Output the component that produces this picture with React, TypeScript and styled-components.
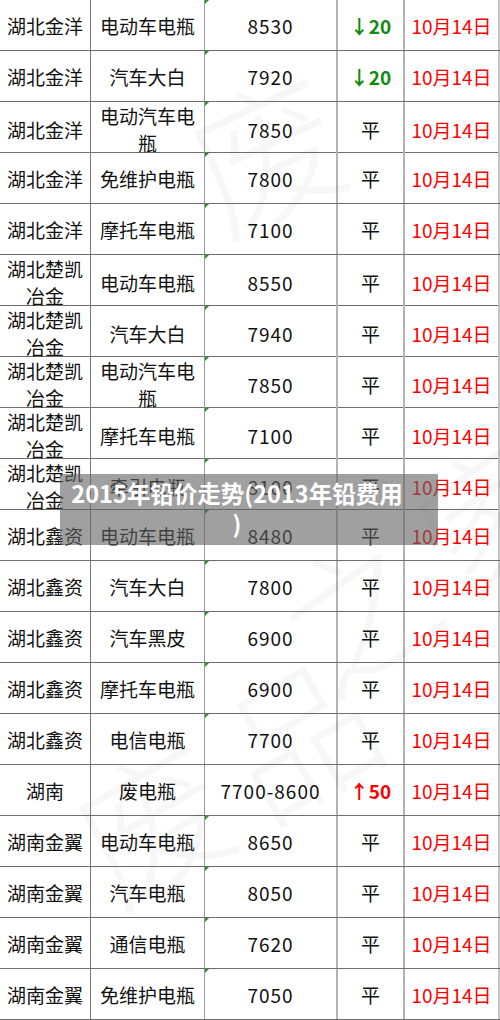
import styled, { createGlobalStyle } from 'styled-components';

const GlobalStyle = createGlobalStyle`
    html, body {
        margin: 0;
        padding: 0;
        background: #ffffff;
    }
    body {
        font-family: "Noto Sans CJK SC", "Noto Sans", sans-serif;
    }
`;

type Trend = 'down' | 'up' | 'flat';

type PriceRow = {
    company: string;
    product: string;
    price: string;
    trend: Trend;
    change?: string;
    date: string;
    textPrice?: boolean;
};

const rows: PriceRow[] = [
    { company: '湖北金洋', product: '电动车电瓶', price: '8530', trend: 'down', change: '20', date: '10月14日' },
    { company: '湖北金洋', product: '汽车大白', price: '7920', trend: 'down', change: '20', date: '10月14日' },
    { company: '湖北金洋', product: '电动汽车电瓶', price: '7850', trend: 'flat', date: '10月14日' },
    { company: '湖北金洋', product: '免维护电瓶', price: '7800', trend: 'flat', date: '10月14日' },
    { company: '湖北金洋', product: '摩托车电瓶', price: '7100', trend: 'flat', date: '10月14日' },
    { company: '湖北楚凯冶金', product: '电动车电瓶', price: '8550', trend: 'flat', date: '10月14日' },
    { company: '湖北楚凯冶金', product: '汽车大白', price: '7940', trend: 'flat', date: '10月14日' },
    { company: '湖北楚凯冶金', product: '电动汽车电瓶', price: '7850', trend: 'flat', date: '10月14日' },
    { company: '湖北楚凯冶金', product: '摩托车电瓶', price: '7100', trend: 'flat', date: '10月14日' },
    { company: '湖北楚凯冶金', product: '牵引电瓶', price: '8100', trend: 'flat', date: '10月14日' },
    { company: '湖北鑫资', product: '电动车电瓶', price: '8480', trend: 'flat', date: '10月14日' },
    { company: '湖北鑫资', product: '汽车大白', price: '7800', trend: 'flat', date: '10月14日' },
    { company: '湖北鑫资', product: '汽车黑皮', price: '6900', trend: 'flat', date: '10月14日' },
    { company: '湖北鑫资', product: '摩托车电瓶', price: '6900', trend: 'flat', date: '10月14日' },
    { company: '湖北鑫资', product: '电信电瓶', price: '7700', trend: 'flat', date: '10月14日' },
    { company: '湖南', product: '废电瓶', price: '7700-8600', trend: 'up', change: '50', date: '10月14日', textPrice: true },
    { company: '湖南金翼', product: '电动车电瓶', price: '8650', trend: 'flat', date: '10月14日' },
    { company: '湖南金翼', product: '汽车电瓶', price: '8050', trend: 'flat', date: '10月14日' },
    { company: '湖南金翼', product: '通信电瓶', price: '7620', trend: 'flat', date: '10月14日' },
    { company: '湖南金翼', product: '免维护电瓶', price: '7050', trend: 'flat', date: '10月14日' },
];

const App = () => {
    return (
        <Page>
            <GlobalStyle />
            <Sheet>
                {rows.map((row, i) => (
                    <Row key={i}>
                        <Cell $border="#7a7a7a" $width={1}>
                            {row.company}
                        </Cell>
                        <Cell $border="#9a9a9a" $width={1}>
                            {row.product}
                        </Cell>
                        <PriceCell $flag={!row.textPrice} $border="#b4b4b4" $width={2}>
                            {row.price}
                        </PriceCell>
                        <Cell $border="#b4b4b4" $width={2}>
                            {row.trend === 'flat' ? (
                                '平'
                            ) : (
                                <Change $up={row.trend === 'up'}>
                                    {row.trend === 'up' ? '↑' : '↓'}
                                    {row.change}
                                </Change>
                            )}
                        </Cell>
                        <DateCell $border="#c4c4c4" $width={2}>
                            {row.date}
                        </DateCell>
                    </Row>
                ))}
            </Sheet>
            <Watermark>
                <Mark $top={80} $left={150} $rot={-25}>
                    废
                </Mark>
                <Mark $top={560} $left={230} $rot={-35}>
                    之家
                </Mark>
                <Mark $top={760} $left={30} $rot={-30}>
                    废品
                </Mark>
            </Watermark>
            <Caption>2015年铅价走势(2013年铅费用)</Caption>
        </Page>
    );
};

export default App;

const Page = styled.div`
    position: relative;
    width: 500px;
    height: 1020px;
    overflow: hidden;
    background: #ffffff;
`;

const Sheet = styled.div`
    display: flex;
    flex-direction: column;
`;

const Row = styled.div`
    display: grid;
    grid-template-columns: 91px 114px 133px 67px 95px;
    height: 51px;
    box-sizing: border-box;
    border-bottom: 1px solid #6e6e6e;
`;

const Cell = styled.div<{ $border: string; $width: number }>`
    position: relative;
    display: flex;
    align-items: center;
    justify-content: center;
    text-align: center;
    box-sizing: border-box;
    padding: 0 6px;
    border-right: ${(p) => p.$width}px solid ${(p) => p.$border};
    font-size: 19px;
    line-height: 27px;
    color: #111111;
    overflow: visible;
`;

const PriceCell = styled(Cell)<{ $flag: boolean }>`
    letter-spacing: 1px;

    &::before {
        content: '';
        display: ${(p) => (p.$flag ? 'block' : 'none')};
        position: absolute;
        top: 0;
        left: 0;
        width: 0;
        height: 0;
        border-top: 4px solid #1e9a1e;
        border-right: 4px solid transparent;
    }
`;

const DateCell = styled(Cell)`
    color: #ff0000;
    padding: 0;
`;

const Change = styled.span<{ $up: boolean }>`
    font-weight: 700;
    color: ${(p) => (p.$up ? '#ff0000' : '#108a10')};
`;

const Watermark = styled.div`
    position: absolute;
    inset: 0;
    pointer-events: none;
`;

const Mark = styled.div<{ $top: number; $left: number; $rot: number }>`
    position: absolute;
    top: ${(p) => p.$top}px;
    left: ${(p) => p.$left}px;
    transform: rotate(${(p) => p.$rot}deg);
    transform-origin: left top;
    font-family: "Noto Sans CJK SC", sans-serif;
    font-weight: 300;
    font-size: 150px;
    letter-spacing: 20px;
    color: rgba(0, 0, 0, 0.03);
    white-space: nowrap;
`;

const Caption = styled.div`
    position: absolute;
    top: 474px;
    left: 60px;
    width: 378px;
    height: 71px;
    box-sizing: border-box;
    padding: 4px 32px 0 8px;
    background: rgba(96, 96, 96, 0.6);
    color: #ffffff;
    font-family: "Noto Sans CJK SC", "Noto Sans", sans-serif;
    font-weight: 700;
    font-size: 23.5px;
    line-height: 30px;
    text-align: center;
    line-break: anywhere;
`;
